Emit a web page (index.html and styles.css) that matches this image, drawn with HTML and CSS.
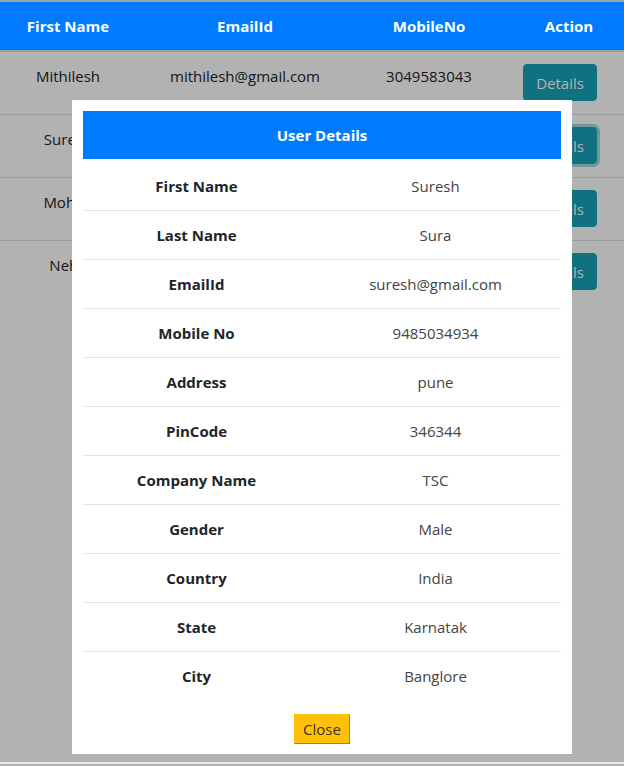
FILE: index.html
```html
<!DOCTYPE html>
<html lang="en">
<head>
    <meta charset="UTF-8">
    <meta name="viewport" content="width=device-width, initial-scale=1.0">
    <title>Users</title>
    <link rel="stylesheet" href="styles.css">
</head>
<body>
<table class="users">
    <thead>
    <tr>
        <th class="col-first">First Name</th>
        <th class="col-email">EmailId</th>
        <th class="col-mobile">MobileNo</th>
        <th class="col-action">Action</th>
    </tr>
    </thead>
    <tbody>
    <tr>
        <td>Mithilesh</td>
        <td>mithilesh@gmail.com</td>
        <td>3049583043</td>
        <td class="cell-action"><button class="btn-details">Details</button></td>
    </tr>
    <tr>
        <td>Suresh</td>
        <td>suresh@gmail.com</td>
        <td>9485034934</td>
        <td class="cell-action"><button class="btn-details focused">Details</button></td>
    </tr>
    <tr>
        <td>Mohan</td>
        <td>mohan@gmail.com</td>
        <td>9837465012</td>
        <td class="cell-action"><button class="btn-details">Details</button></td>
    </tr>
    <tr>
        <td>Neha</td>
        <td>neha@gmail.com</td>
        <td>8765432190</td>
        <td class="cell-action"><button class="btn-details">Details</button></td>
    </tr>
    </tbody>
</table>

<div class="overlay"></div>

<div class="modal">
    <div class="modal-title">User Details</div>
    <table class="details">
        <tr><th>First Name</th><td>Suresh</td></tr>
        <tr><th>Last Name</th><td>Sura</td></tr>
        <tr><th>EmailId</th><td>suresh@gmail.com</td></tr>
        <tr><th>Mobile No</th><td>9485034934</td></tr>
        <tr><th>Address</th><td>pune</td></tr>
        <tr><th>PinCode</th><td>346344</td></tr>
        <tr><th>Company Name</th><td>TSC</td></tr>
        <tr><th>Gender</th><td>Male</td></tr>
        <tr><th>Country</th><td>India</td></tr>
        <tr><th>State</th><td>Karnatak</td></tr>
        <tr><th>City</th><td>Banglore</td></tr>
    </table>
    <div class="modal-footer">
        <button class="btn-close">Close</button>
    </div>
</div>

<div class="page-edge"></div>
</body>
</html>
```

FILE: styles.css
```css
body {
    margin: 0;
    font-family: "Open Sans", "Noto Sans", Arial, sans-serif;
    font-size: 15px;
    color: #212529;
    background-color: #fff;
}
table {
    border-collapse: collapse;
}
.users {
    width: 100%;
    table-layout: fixed;
}
.users thead {
    position: relative;
    z-index: 3;
}
.users th {
    box-sizing: border-box;
    background-color: #007bff;
    color: #fff;
    font-weight: bold;
    height: 50px;
    padding: 0 4px;
    border-top: 2px solid #e1ebf7;
    border-bottom: 2px solid #dee2e6;
    text-align: center;
}
.users th.col-action {
    padding-left: 14px;
}
.users td {
    padding: 12px 4px 13px;
    line-height: 24px;
    border-top: 1px solid #dee2e6;
    text-align: center;
    vertical-align: top;
}
.users td.cell-action {
    text-align: left;
    padding-left: 19px;
}
.col-first { width: 136px; }
.col-email { width: 218px; }
.col-mobile { width: 150px; }
.col-action { width: 120px; }
.btn-details {
    font-family: inherit;
    font-size: 15px;
    color: #fff;
    background-color: #17a2b8;
    border: 1px solid #17a2b8;
    border-radius: 4px;
    padding: 0;
    height: 37px;
    width: 74px;
    vertical-align: top;
}
.btn-details.focused {
    box-shadow: 0 0 0 3px rgba(58, 176, 195, 0.5);
}
.overlay {
    position: fixed;
    top: 0;
    left: 0;
    right: 0;
    bottom: 0;
    background-color: rgba(0, 0, 0, 0.3);
    z-index: 2;
}
.page-edge {
    position: fixed;
    left: 0;
    right: 0;
    bottom: 2px;
    height: 2px;
    background-color: #e6e6e6;
    z-index: 3;
}
.modal {
    position: fixed;
    top: 100px;
    left: 72px;
    width: 478px;
    padding: 11px 11px 10px;
    background-color: #fff;
    z-index: 4;
}
.modal-title {
    background-color: #007bff;
    color: #fff;
    font-weight: bold;
    text-align: center;
    height: 48px;
    line-height: 48px;
}
.details {
    width: 100%;
    margin-top: 3px;
}
.details tr + tr th,
.details tr + tr td {
    border-top: 1px solid #e4e4e4;
}
.details th,
.details td {
    height: 48px;
    padding: 0;
    text-align: center;
}
.details th {
    width: 227px;
    font-weight: bold;
    color: #212529;
}
.details td {
    color: #444;
}
.modal-footer {
    text-align: center;
    margin-top: 14px;
    height: 30px;
}
.btn-close {
    font-family: inherit;
    font-size: 15px;
    color: #3b3320;
    background-color: #ffc107;
    border: 1px solid #ffc107;
    border-right-color: #b08400;
    border-bottom-color: #b08400;
    height: 30px;
    width: 56px;
    padding: 0;
    vertical-align: top;
}
```
